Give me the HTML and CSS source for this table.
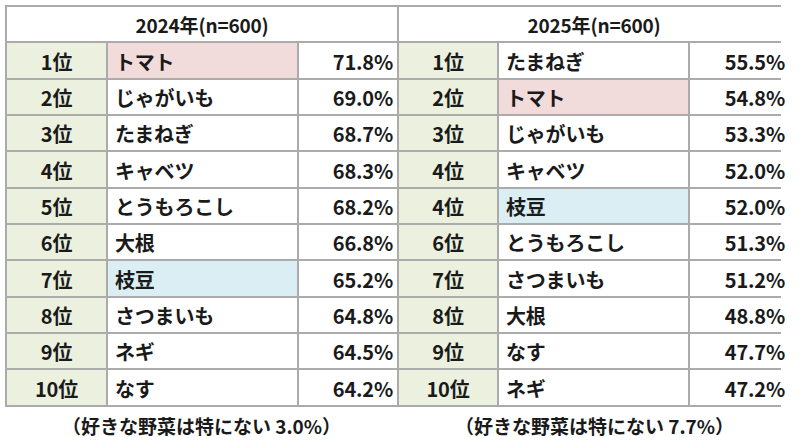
FILE: index.html
```html
<!DOCTYPE html>
<html lang="ja">
<head>
<meta charset="utf-8">
<link rel="stylesheet" href="styles.css">
</head>
<body>
<div class="page">
  <div class="grid">
    <div class="head">2024年(n=600)</div>
    <div class="head">2025年(n=600)</div>

    <div class="rank">1位</div><div class="name pink">トマト</div><div class="pct">71.8%</div>
    <div class="rank">1位</div><div class="name">たまねぎ</div><div class="pct">55.5%</div>

    <div class="rank">2位</div><div class="name">じゃがいも</div><div class="pct">69.0%</div>
    <div class="rank">2位</div><div class="name pink">トマト</div><div class="pct">54.8%</div>

    <div class="rank">3位</div><div class="name">たまねぎ</div><div class="pct">68.7%</div>
    <div class="rank">3位</div><div class="name">じゃがいも</div><div class="pct">53.3%</div>

    <div class="rank">4位</div><div class="name">キャベツ</div><div class="pct">68.3%</div>
    <div class="rank">4位</div><div class="name">キャベツ</div><div class="pct">52.0%</div>

    <div class="rank">5位</div><div class="name">とうもろこし</div><div class="pct">68.2%</div>
    <div class="rank">4位</div><div class="name blue">枝豆</div><div class="pct">52.0%</div>

    <div class="rank">6位</div><div class="name">大根</div><div class="pct">66.8%</div>
    <div class="rank">6位</div><div class="name">とうもろこし</div><div class="pct">51.3%</div>

    <div class="rank">7位</div><div class="name blue">枝豆</div><div class="pct">65.2%</div>
    <div class="rank">7位</div><div class="name">さつまいも</div><div class="pct">51.2%</div>

    <div class="rank">8位</div><div class="name">さつまいも</div><div class="pct">64.8%</div>
    <div class="rank">8位</div><div class="name">大根</div><div class="pct">48.8%</div>

    <div class="rank">9位</div><div class="name">ネギ</div><div class="pct">64.5%</div>
    <div class="rank">9位</div><div class="name">なす</div><div class="pct">47.7%</div>

    <div class="rank">10位</div><div class="name">なす</div><div class="pct">64.2%</div>
    <div class="rank">10位</div><div class="name">ネギ</div><div class="pct">47.2%</div>
  </div>
  <div class="notes">
    <div class="note">（好きな野菜は特にない 3.0%）</div>
    <div class="note">（好きな野菜は特にない 7.7%）</div>
  </div>
</div>
</body>
</html>
```

FILE: styles.css
```css
html, body {
  margin: 0;
  padding: 0;
  background: #ffffff;
}
body {
  font-family: "Noto Sans CJK JP", "Noto Sans", sans-serif;
  font-weight: 700;
  color: #1a1a1a;
}
.page {
  padding: 5px 0 0 5px;
}
.grid {
  display: grid;
  grid-template-columns: 99px 189px 98px 98px 189px 99px;
  grid-auto-rows: 34.35px;
  gap: 2px;
  padding: 2px;
  width: 772px;
  background: #ababab;
  font-size: 20px;
  letter-spacing: -0.2px;
}
.grid > div {
  background: #ffffff;
  display: flex;
  align-items: center;
  white-space: nowrap;
  padding-top: 1px;
  box-sizing: border-box;
}
.head {
  grid-column: span 3;
  justify-content: center;
  font-size: 19px;
}
.rank {
  justify-content: center;
  background: #ebf1de !important;
}
.name {
  padding-left: 7px;
}
.pct {
  justify-content: flex-end;
  padding-right: 4px;
}
.pink { background: #f2dcdb !important; }
.blue { background: #daeef3 !important; }
.notes {
  display: flex;
  width: 786px;
  margin-top: 8px;
}
.note {
  width: 393px;
  text-align: center;
  font-size: 19px;
  line-height: 22px;
}
```
